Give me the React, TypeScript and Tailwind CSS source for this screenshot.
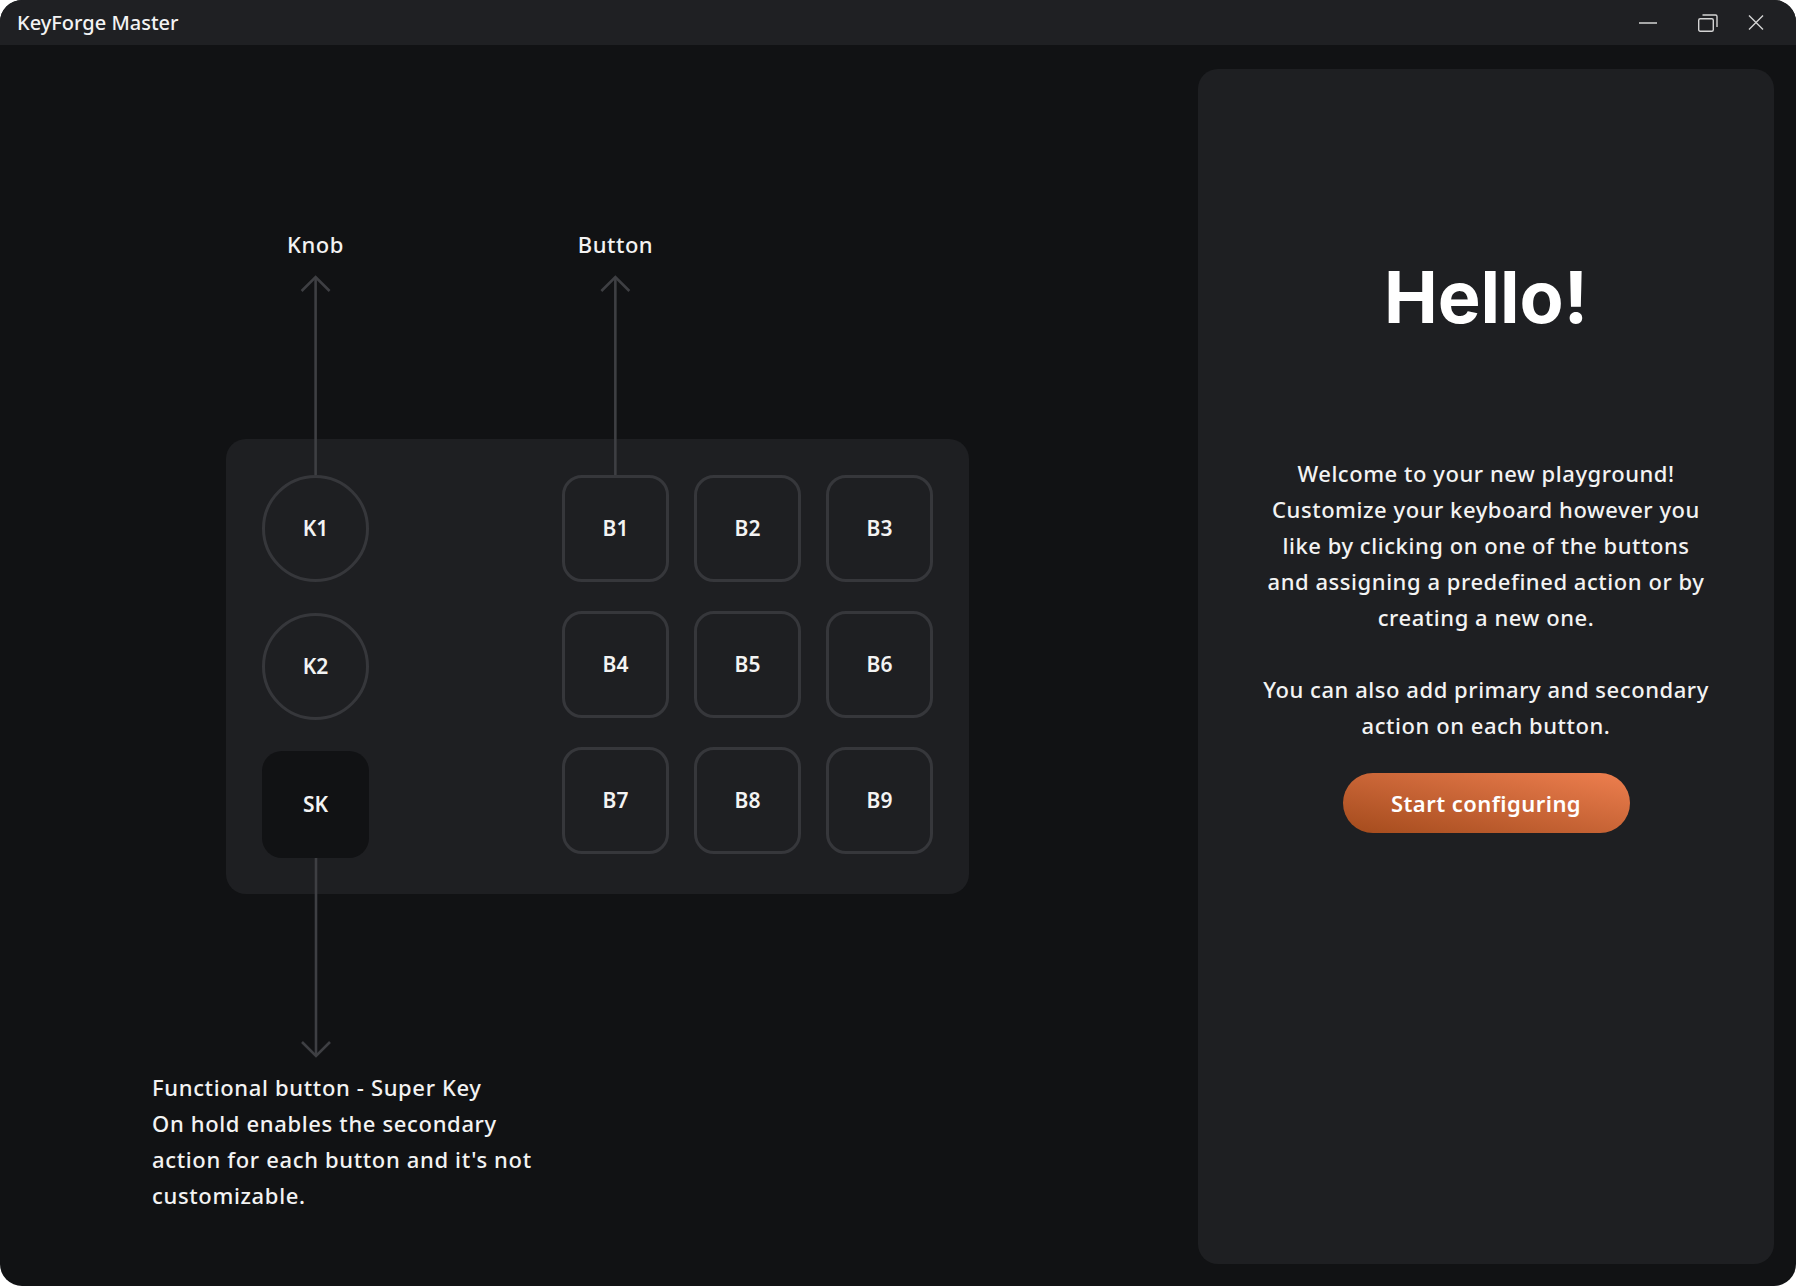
import type { ReactNode } from "react";

const sans = "font-['Noto_Sans','Open_Sans',sans-serif]";

function ArrowUp({ height }: { height: number }) {
  return (
    <svg width="32" height={height} viewBox={`0 0 32 ${height}`} fill="none">
      <path d={`M16 2V${height}`} stroke="#3e3f43" strokeWidth="2.6" />
      <path d="M2 16L16 2L30 16" stroke="#3e3f43" strokeWidth="2.6" />
    </svg>
  );
}

function ArrowDown({ height }: { height: number }) {
  return (
    <svg width="32" height={height} viewBox={`0 0 32 ${height}`} fill="none">
      <path d={`M16 0V${height - 2}`} stroke="#3e3f43" strokeWidth="2.6" />
      <path d={`M2 ${height - 16}L16 ${height - 2}L30 ${height - 16}`} stroke="#3e3f43" strokeWidth="2.6" />
    </svg>
  );
}

function Key({ label, shape = "square", children }: { label: string; shape?: "square" | "circle" | "super"; children?: ReactNode }) {
  const base = "relative flex h-[107px] w-[107px] items-center justify-center text-[21px] font-semibold text-[#f3f3f3]";
  const look =
    shape === "circle"
      ? "rounded-full border-[3px] border-[#36373b]"
      : shape === "super"
        ? "rounded-[20px] bg-[#111214]"
        : "rounded-[20px] border-[3px] border-[#36373b]";
  return (
    <div className={`${base} ${look}`}>
      {label}
      {children}
    </div>
  );
}

function Pointer({ label }: { label: string }) {
  return (
    <div className="absolute bottom-full left-1/2 mb-[3px] flex -translate-x-1/2 flex-col items-center">
      <span className="whitespace-nowrap text-[22px] font-medium leading-[30px] tracking-[0.5px] text-[#f3f3f3]">{label}</span>
      <div className="mt-[16px]">
        <ArrowUp height={200} />
      </div>
    </div>
  );
}

export default function App() {
  const buttons = ["B1", "B2", "B3", "B4", "B5", "B6", "B7", "B8", "B9"];

  return (
    <div className={`h-[1286px] w-[1796px] bg-white ${sans}`}>
      <div className="flex h-full flex-col overflow-hidden rounded-[22px] bg-[#111214]">
        {/* title bar */}
        <div className="flex h-[45px] shrink-0 items-center justify-between bg-[#1f2023] pl-[17px] pr-[32px]">
          <span className="text-[20px] font-medium text-[#f3f3f3]">KeyForge Master</span>
          <div className="flex items-center">
            <svg width="18" height="2" viewBox="0 0 18 2">
              <path d="M0 1H18" stroke="#d4d4d4" strokeWidth="1.4" />
            </svg>
            <svg className="ml-[41px]" width="20" height="18" viewBox="0 0 20 18" fill="none">
              <rect x="0.7" y="4.7" width="14.6" height="12.6" rx="1.5" stroke="#d4d4d4" strokeWidth="1.4" />
              <path d="M4.5 1H17.5C18.3 1 19 1.7 19 2.5V13" stroke="#d4d4d4" strokeWidth="1.4" />
            </svg>
            <svg className="ml-[30px]" width="16" height="15" viewBox="0 0 16 15" fill="none">
              <path d="M1 0.5L15 14.5M15 0.5L1 14.5" stroke="#d4d4d4" strokeWidth="1.4" />
            </svg>
          </div>
        </div>

        {/* body */}
        <div className="flex min-h-0 flex-1 gap-6 pb-[22px] pl-6 pr-[22px] pt-6">
          {/* device diagram */}
          <div className="flex flex-1 flex-col">
            <div className="ml-[202px] mt-[370px] flex w-fit rounded-[20px] bg-[#1e1f22] px-[36px] pb-[36px] pt-[36px]">
              <div className="flex flex-col gap-[31px]">
                <Key label="K1" shape="circle">
                  <Pointer label="Knob" />
                </Key>
                <Key label="K2" shape="circle" />
                <Key label="SK" shape="super">
                  <div className="absolute left-1/2 top-full -translate-x-1/2">
                    <ArrowDown height={200} />
                  </div>
                </Key>
              </div>
              <div className="ml-[193px] grid grid-cols-3 gap-x-[25px] gap-y-[29px] self-start">
                {buttons.map((b) => (
                  <Key key={b} label={b}>
                    {b === "B1" && <Pointer label="Button" />}
                  </Key>
                ))}
              </div>
            </div>

            <p className="ml-[128px] mt-[175px] text-[22px] font-medium leading-[36px] tracking-[0.65px] text-[#f3f3f3]">
              Functional button - Super Key
              <br />
              On hold enables the secondary
              <br />
              action for each button and it's not
              <br />
              customizable.
            </p>
          </div>

          {/* welcome panel */}
          <div className="flex w-[576px] shrink-0 flex-col items-center rounded-[20px] bg-[#1e1f22]">
            <h1 className="mt-[192px] font-['Inter',sans-serif] text-[72px] font-bold leading-[72px] text-white">Hello!</h1>
            <div className="mt-[122px] whitespace-nowrap text-center text-[22px] font-medium leading-[36px] tracking-[0.55px] text-[#f3f3f3]">
              <p>
                Welcome to your new playground!
                <br />
                Customize your keyboard however you
                <br />
                like by clicking on one of the buttons
                <br />
                and assigning a predefined action or by
                <br />
                creating a new one.
              </p>
              <p className="mt-[36px]">
                You can also add primary and secondary
                <br />
                action on each button.
              </p>
            </div>
            <button className="mt-[30px] flex h-[60px] w-[287px] items-center justify-center rounded-full bg-gradient-to-tr from-[#a44b1c] to-[#ee7f4f] text-[22px] font-semibold tracking-[0.45px] text-white">
              Start configuring
            </button>
          </div>
        </div>
      </div>
    </div>
  );
}
